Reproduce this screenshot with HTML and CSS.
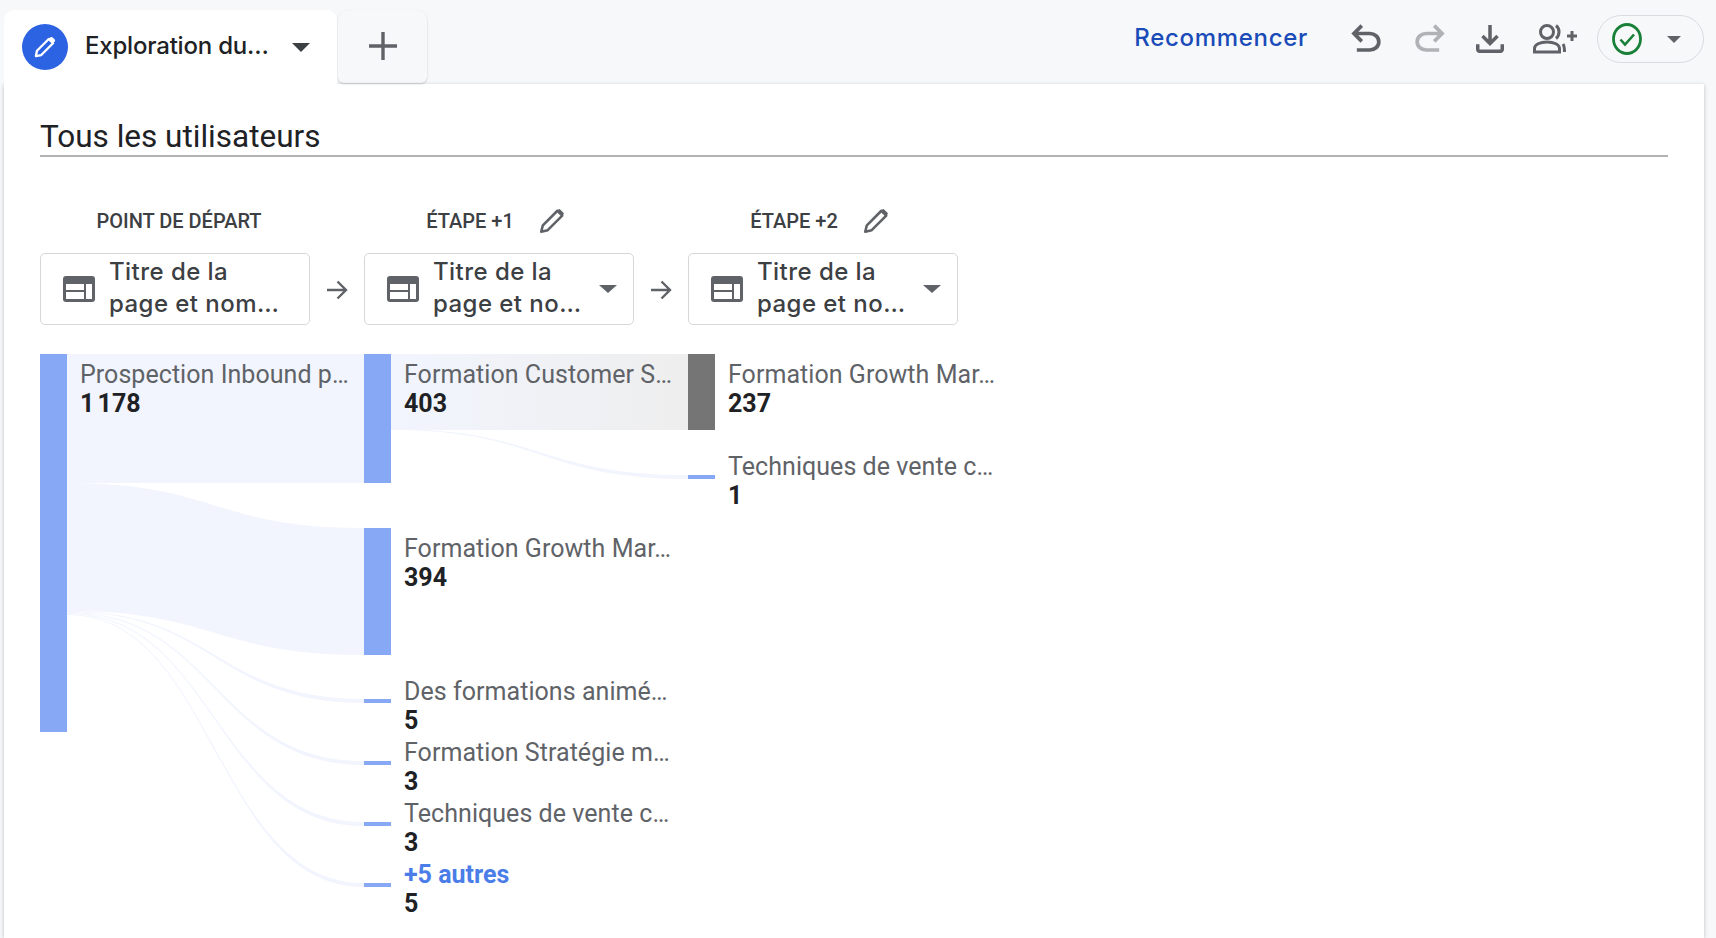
FILE: index.html
```html
<!DOCTYPE html>
<html lang="fr">
<head>
    <meta charset="UTF-8">
    <title>Exploration du parcours</title>
    <link rel="stylesheet" href="styles.css">
</head>
<body>
<header class="topbar">
    <div class="tab tab-active">
        <span class="tab-badge">
            <svg width="30" height="30" viewBox="0 0 28 28"><path d="M5.500 22.500l1-5L17.500 6.500l4 4L10.500 21.500z" fill="none" stroke="#fff" stroke-width="2.200" stroke-linejoin="round"/><path d="M17.500 6.500l1.500-1.500a1.500 1.500 0 0 1 2 0l2 2a1.500 1.500 0 0 1 0 2l-1.500 1.500z" fill="#fff"/></svg>
        </span>
        <span class="tab-name">Exploration du…</span>
        <span class="caret caret-dark"></span>
    </div>
    <div class="tab tab-add">
        <svg width="30" height="30" viewBox="0 0 30 30"><path d="M15 1v28M1 15h28" stroke="#5f6368" stroke-width="3.400" fill="none"/></svg>
    </div>
    <div class="actions">
        <a class="restart">Recommencer</a>
        <svg class="icon undo" width="44" height="44" viewBox="0 0 24 24"><path d="M7 19v-2h7.100q1.575 0 2.738-1T18 13.500q0-1.500-1.163-2.500T14.100 10H7.800l2.600 2.600L9 14 4 9l5-5 1.400 1.400L7.800 8h6.300q2.425 0 4.163 1.575T20 13.500q0 2.350-1.737 3.925T14.100 19z"/></svg>
        <svg class="icon redo" width="44" height="44" viewBox="0 0 24 24"><path transform="matrix(-1 0 0 1 24 0)" d="M7 19v-2h7.100q1.575 0 2.738-1T18 13.500q0-1.500-1.163-2.500T14.100 10H7.800l2.600 2.600L9 14 4 9l5-5 1.400 1.400L7.800 8h6.300q2.425 0 4.163 1.575T20 13.500q0 2.350-1.737 3.925T14.100 19z"/></svg>
        <svg class="icon download" width="42" height="42" viewBox="0 0 24 24"><path d="M12 16l-5-5 1.400-1.450 2.600 2.600V4h2v8.150l2.600-2.600L17 11l-5 5zM6 20q-.825 0-1.413-.588T4 18v-3h2v3h12v-3h2v3q0 .825-.587 1.413T18 20H6z"/></svg>
        <svg class="share" width="46" height="34" viewBox="0 0 46 34"><circle cx="15" cy="10" r="6.500"/><path d="M2.500 30v-3.500c0-4 5.500-6.500 12.500-6.500s12.500 2.500 12.500 6.500V30z"/><path d="M24 3.500c4 3 4 10 0 13M31 22c1 1.500 1.500 4 1.500 8"/><path d="M35 14h10M40 9v10"/></svg>
        <div class="status">
            <svg width="32" height="34" viewBox="0 0 32 34"><ellipse cx="16" cy="17" rx="13.500" ry="14.500" fill="none" stroke="#188038" stroke-width="2.800"/><path d="M9.500 17.500l4.500 5 9-10" fill="none" stroke="#188038" stroke-width="2.600"/></svg>
            <span class="caret caret-small"></span>
        </div>
    </div>
</header>

<main class="panel">
    <h1 class="segment">Tous les utilisateurs</h1>

    <!-- Step headers -->
    <div class="steps">
        <div class="step-head step-start">POINT DE DÉPART</div>
        <div class="step-head">ÉTAPE +1
            <svg class="pencil" width="28" height="28" viewBox="0 0 26 26"><path d="M3 23l1.500-6L18 3.500l4.500 4.500L9 21.500z" fill="none" stroke="#5f6368" stroke-width="2.400" stroke-linejoin="round"/><path d="M18 3.500l4.500 4.500 1-2-3.500-3.500z" fill="#5f6368" stroke="#5f6368"/></svg>
        </div>
        <div class="step-head">ÉTAPE +2
            <svg class="pencil" width="28" height="28" viewBox="0 0 26 26"><path d="M3 23l1.500-6L18 3.500l4.500 4.500L9 21.500z" fill="none" stroke="#5f6368" stroke-width="2.400" stroke-linejoin="round"/><path d="M18 3.500l4.500 4.500 1-2-3.500-3.500z" fill="#5f6368" stroke="#5f6368"/></svg>
        </div>
    </div>

    <!-- Dimension selectors -->
    <div class="selectors">
        <div class="selector">
            <svg class="table-icon" width="32" height="26" viewBox="0 0 32 26"><path d="M3 0h26a3 3 0 0 1 3 3v20a3 3 0 0 1-3 3H3a3 3 0 0 1-3-3V3a3 3 0 0 1 3-3zM3 8v6h18V8zm0 8v7h18v-7zm20-8v15h6V8z" fill="#5f6368" fill-rule="evenodd"/></svg>
            <span class="selector-text">Titre de la<br>page et nom…</span>
        </div>
        <svg class="arrow" width="24" height="24" viewBox="0 0 24 24"><path d="M2 12h19M12.500 3.500L21 12l-8.500 8.500" fill="none" stroke="#5f6368" stroke-width="2.400"/></svg>
        <div class="selector">
            <svg class="table-icon" width="32" height="26" viewBox="0 0 32 26"><path d="M3 0h26a3 3 0 0 1 3 3v20a3 3 0 0 1-3 3H3a3 3 0 0 1-3-3V3a3 3 0 0 1 3-3zM3 8v6h18V8zm0 8v7h18v-7zm20-8v15h6V8z" fill="#5f6368" fill-rule="evenodd"/></svg>
            <span class="selector-text">Titre de la<br>page et no…</span>
            <span class="caret caret-grey"></span>
        </div>
        <svg class="arrow" width="24" height="24" viewBox="0 0 24 24"><path d="M2 12h19M12.500 3.500L21 12l-8.500 8.500" fill="none" stroke="#5f6368" stroke-width="2.400"/></svg>
        <div class="selector">
            <svg class="table-icon" width="32" height="26" viewBox="0 0 32 26"><path d="M3 0h26a3 3 0 0 1 3 3v20a3 3 0 0 1-3 3H3a3 3 0 0 1-3-3V3a3 3 0 0 1 3-3zM3 8v6h18V8zm0 8v7h18v-7zm20-8v15h6V8z" fill="#5f6368" fill-rule="evenodd"/></svg>
            <span class="selector-text">Titre de la<br>page et no…</span>
            <span class="caret caret-grey"></span>
        </div>
    </div>

    <!-- Sankey: viewBox uses page coordinates -->
    <svg class="sankey" width="1040" height="584" viewBox="40 354 1040 584">
        <defs>
            <linearGradient id="hoverFlow">
                <stop offset="0" stop-color="#f2f5fe"/>
                <stop offset="1" stop-color="#eeeeee"/>
            </linearGradient>
        </defs>

        <rect class="flow" x="67" y="354" width="297" height="129"/>
        <path class="flow" d="M67 483C215 483 215 528 364 528V655C215 655 215 611 67 611z"/>
        <path class="flow" d="M67 611C215 611 215 699 364 699V703C215 703 215 612 67 612z"/>
        <path class="flow" d="M67 612C215 612 215 761 364 761V765C215 765 215 613 67 613z"/>
        <path class="flow" d="M67 613C215 613 215 822 364 822V826C215 826 215 614 67 614z"/>
        <path class="flow" d="M67 614C215 614 215 883 364 883V887C215 887 215 615 67 615z"/>
        <rect x="391" y="354" width="297" height="76" fill="url(#hoverFlow)"/>
        <path class="flow" d="M391 429C540 429 540 475 688 475V479C540 479 540 430 391 430z"/>

        <rect class="node" x="40" y="354" width="27" height="378"/>
        <rect class="node" x="364" y="354" width="27" height="129"/>
        <rect class="node" x="364" y="528" width="27" height="127"/>
        <rect class="node" x="364" y="699" width="27" height="4"/>
        <rect class="node" x="364" y="761" width="27" height="4"/>
        <rect class="node" x="364" y="822" width="27" height="4"/>
        <rect class="node" x="364" y="883" width="27" height="4"/>
        <rect class="node-active" x="688" y="354" width="27" height="76"/>
        <rect class="node" x="688" y="475" width="27" height="4"/>

        <text class="label" x="80" y="383">Prospection Inbound p…</text>
        <text class="value value-total" x="80" y="412">1 178</text>
        <text class="label" x="404" y="383">Formation Customer S…</text>
        <text class="value" x="404" y="412">403</text>
        <text class="label" x="404" y="557">Formation Growth Mar…</text>
        <text class="value" x="404" y="586">394</text>
        <text class="label" x="404" y="700">Des formations animé…</text>
        <text class="value" x="404" y="729">5</text>
        <text class="label" x="404" y="761">Formation Stratégie m…</text>
        <text class="value" x="404" y="790">3</text>
        <text class="label" x="404" y="822">Techniques de vente c…</text>
        <text class="value" x="404" y="851">3</text>
        <text class="more" x="404" y="883">+5 autres</text>
        <text class="value" x="404" y="912">5</text>
        <text class="label" x="728" y="383">Formation Growth Mar…</text>
        <text class="value" x="728" y="412">237</text>
        <text class="label" x="728" y="475">Techniques de vente c…</text>
        <text class="value" x="728" y="504">1</text>
    </svg>
</main>
</body>
</html>
```

FILE: styles.css
```css
body {
    margin: 0;
    height: 938px;
    overflow: hidden;
    background-color: #f7f8fa;
    font-family: Roboto, Arial, sans-serif;
    color: #202124;
}

/* Top bar */
.topbar {
    display: flex;
    height: 84px;
    padding-left: 4px;
    box-sizing: border-box;
}
.tab {
    display: flex;
    align-items: center;
    margin-top: 10px;
    border-radius: 10px 10px 0 0;
}
.tab-active {
    width: 333px;
    height: 74px;
    padding: 0 27px 0 18px;
    box-sizing: border-box;
    background-color: white;
    position: relative;
    z-index: 1;
}
.tab-badge {
    display: flex;
    align-items: center;
    justify-content: center;
    width: 46px;
    height: 46px;
    border-radius: 50%;
    background-color: #2b63e3;
}
.tab-name {
    margin-left: 17px;
    margin-top: -4px;
    flex: 1;
    font-family: Inter, Roboto, sans-serif;
    font-size: 24px;
    font-weight: 500;
    letter-spacing: -0.2px;
}
.tab-add {
    justify-content: center;
    width: 89px;
    height: 73px;
    margin-left: 1px;
    padding-bottom: 2px;
    box-sizing: border-box;
    border-radius: 10px 10px 6px 6px;
    box-shadow: 0 1px 2px rgba(60, 64, 67, 0.25);
}
.caret {
    width: 0;
    height: 0;
    border-style: solid;
    border-color: transparent;
    border-bottom-width: 0;
}
.caret-dark {
    border-width: 9px 9px 0;
    border-top-color: #3c4043;
}
.caret-small {
    border-width: 7px 7px 0;
    border-top-color: #5f6368;
    margin-left: 24px;
}
.caret-grey {
    border-width: 8px 9px 0;
    border-top-color: #5f6368;
    margin-left: auto;
}

.actions {
    display: flex;
    align-items: center;
    margin-left: auto;
    margin-right: 12px;
    height: 48px;
    margin-top: 15px;
}
.restart {
    font-family: Inter, Roboto, sans-serif;
    font-size: 24px;
    font-weight: 500;
    letter-spacing: 0.7px;
    color: #1a4bb8;
    margin-right: 36px;
    margin-top: -4px;
}
.icon {
    fill: #5f6368;
}
.undo {
    margin-right: 20px;
}
.redo {
    fill: #b0b2b5;
    margin-right: 17px;
}
.download {
    margin-right: 21px;
}
.share {
    fill: none;
    stroke: #5f6368;
    stroke-width: 3;
    margin-right: 19px;
}
.status {
    display: flex;
    align-items: center;
    width: 107px;
    height: 48px;
    padding-left: 13px;
    box-sizing: border-box;
    border: 1px solid #dadce0;
    border-radius: 24px;
}

/* Main panel */
.panel {
    height: 854px;
    margin: 0 12px 0 4px;
    padding: 0 36px;
    box-sizing: border-box;
    background-color: white;
    box-shadow: 0 1px 4px rgba(60, 64, 67, 0.3);
}
.segment {
    margin: 0;
    padding-top: 34px;
    height: 73px;
    box-sizing: border-box;
    font-size: 31.500px;
    line-height: 37px;
    font-weight: 400;
    border-bottom: 2px solid #b3b3b3;
}
.steps {
    display: grid;
    grid-template-columns: repeat(3, 270px);
    column-gap: 54px;
    margin-top: 47px;
    height: 34px;
}
.step-head {
    display: flex;
    align-items: center;
    justify-content: center;
    gap: 24px;
    padding-right: 6px;
    font-size: 20px;
    font-weight: 500;
    color: #3c4043;
}
.step-start {
    padding: 0 0 0 8px;
}
.selectors {
    display: flex;
    align-items: center;
    margin-top: 15px;
}
.selector {
    display: flex;
    align-items: center;
    width: 270px;
    height: 72px;
    padding: 0 16px 0 22px;
    box-sizing: border-box;
    border: 1px solid #d5d7db;
    border-radius: 5px;
}
.selector-text {
    margin-left: 14px;
    margin-top: -2px;
    font-family: Inter, Roboto, sans-serif;
    font-size: 24px;
    line-height: 32.500px;
    font-weight: 500;
    letter-spacing: 0.45px;
    color: #3c4043;
    white-space: nowrap;
}
.arrow {
    margin: 2px 15px 0;
}
.sankey {
    display: block;
    margin-top: 29px;
}

/* Sankey parts */
.flow {
    fill: #f2f5fe;
}
.node {
    fill: #87a9f5;
}
.node-active {
    fill: #757575;
}
.label {
    font-size: 25px;
    letter-spacing: 0.05px;
    fill: #5f6368;
}
.value {
    font-size: 25px;
    font-weight: 700;
    fill: #202124;
}
.value-total {
    word-spacing: -3px;
}
.more {
    font-size: 25px;
    font-weight: 700;
    fill: #4a7de8;
}
```
